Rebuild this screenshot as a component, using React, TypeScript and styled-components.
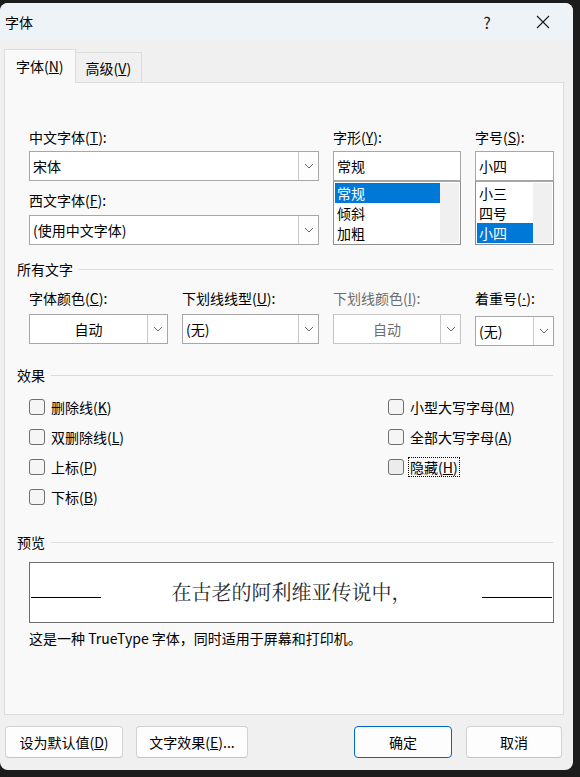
import React from "react";
import styled, { createGlobalStyle } from "styled-components";

const Global = createGlobalStyle`
  html, body { margin: 0; padding: 0; background: #1c1c1c; }
  body { font-family: "Microsoft YaHei UI", "Noto Sans CJK SC", "Noto Sans", sans-serif; font-size: 14px; color: #000; }
  * { box-sizing: border-box; }
`;

const Dialog = styled.div`
  width: 573px;
  height: 767px;
  margin-top: 3px;
  background: #f0f0f0;
  border-radius: 8px;
  overflow: hidden;
  display: flex;
  flex-direction: column;
`;

const TitleBar = styled.div`
  height: 37px;
  background: #eef3f8;
  display: flex;
  align-items: center;
  padding-left: 5px;
  font-size: 14px;
`;

const TitleText = styled.div`
  flex: 1;
  line-height: 20px;
`;

const TitleBtn = styled.div<{ $w: number }>`
  width: ${(p) => p.$w}px;
  height: 37px;
  display: flex;
  align-items: center;
  justify-content: center;
  font-size: 16px;
  color: #1a1a1a;
`;

const TabStrip = styled.div`
  display: flex;
  align-items: flex-end;
  padding-left: 4px;
  margin-top: 9px;
  height: 33px;
`;

const Tab = styled.div<{ $active?: boolean }>`
  height: ${(p) => (p.$active ? 34 : 30)}px;
  padding: 0 ${(p) => (p.$active ? 11 : 10)}px;
  background: ${(p) => (p.$active ? "#f9f9f9" : "#f0f0f0")};
  border: 1px solid #dcdcdc;
  border-bottom: none;
  ${(p) => (p.$active ? "" : "border-left: none;")}
  display: flex;
  align-items: center;
  justify-content: center;
  font-size: 14px;
  margin-bottom: ${(p) => (p.$active ? -1 : 0)}px;
  position: relative;
  z-index: ${(p) => (p.$active ? 1 : 0)};
  padding-bottom: ${(p) => (p.$active ? 1 : 0)}px;
`;

const Panel = styled.div`
  margin-left: 4px;
  width: 560px;
  height: 633px;
  background: #f9f9f9;
  border: 1px solid #dcdcdc;
  padding: 44px 10px 0 12px;
  display: flex;
  flex-direction: column;
`;

const TopGrid = styled.div`
  display: grid;
  grid-template-columns: 290px 128px 79px;
  column-gap: 14px;
  margin-left: 12px;
`;

const Col = styled.div`
  display: flex;
  flex-direction: column;
`;

const Label = styled.div<{ $disabled?: boolean; $mt?: number; $mb?: number }>`
  line-height: 20px;
  height: 20px;
  font-size: 14px;
  white-space: nowrap;
  color: ${(p) => (p.$disabled ? "#6d6d6d" : "#000")};
  margin-top: ${(p) => p.$mt ?? 0}px;
  margin-bottom: ${(p) => p.$mb ?? 4}px;
`;

const Dot = styled.span`
  font-family: "DejaVu Sans", sans-serif;
  text-decoration: underline;
`;

const ComboBox = styled.div<{ $disabled?: boolean; $mt?: number }>`
  height: 30px;
  background: #fff;
  border: 1px solid ${(p) => (p.$disabled ? "#c4c4c4" : "#a7a7a7")};
  display: flex;
  align-items: stretch;
  margin-top: ${(p) => p.$mt ?? 0}px;
  color: ${(p) => (p.$disabled ? "#6d6d6d" : "#000")};
`;

const ComboValue = styled.div<{ $center?: boolean }>`
  flex: 1;
  display: flex;
  align-items: center;
  justify-content: ${(p) => (p.$center ? "center" : "flex-start")};
  padding-left: ${(p) => (p.$center ? 0 : 3)}px;
  font-size: 14px;
  white-space: nowrap;
`;

const ArrowBox = styled.div`
  width: 20px;
  border-left: 1px solid #c9c9c9;
  background: #fdfdfd;
  display: flex;
  align-items: center;
  justify-content: center;
`;

const TextInput = styled.div`
  height: 30px;
  background: #fff;
  border: 1px solid #a7a7a7;
  display: flex;
  align-items: center;
  padding-left: 3px;
  font-size: 14px;
`;

const ListBox = styled.div`
  height: 64px;
  border: 1px solid #8f8f8f;
  border-top-color: #a7a7a7;
  background: #fff;
  display: flex;
  padding: 1px;
`;

const ListItems = styled.div`
  flex: 1;
  display: flex;
  flex-direction: column;
`;

const ListItem = styled.div<{ $sel?: boolean }>`
  height: 20px;
  line-height: 20px;
  padding-left: 2px;
  font-size: 14px;
  background: ${(p) => (p.$sel ? "#0078d7" : "transparent")};
  color: ${(p) => (p.$sel ? "#fff" : "#000")};
`;

const ScrollTrack = styled.div`
  width: 19px;
  background: #f0f0f0;
`;

const SectionHeader = styled.div<{ $mt: number }>`
  display: flex;
  align-items: center;
  gap: 6px;
  margin-top: ${(p) => p.$mt}px;
  height: 20px;
  line-height: 20px;
  font-size: 14px;
  &::after {
    content: "";
    flex: 1;
    height: 1px;
    background: #dcdcdc;
  }
`;

const FourGrid = styled.div`
  display: grid;
  grid-template-columns: 139px 137px 128px 79px;
  column-gap: 14px;
  margin-left: 12px;
  margin-top: 9px;
`;

const EffectsGrid = styled.div`
  display: grid;
  grid-template-columns: 359px auto;
  margin-left: 12px;
  margin-top: 12px;
`;

const CheckCol = styled.div`
  display: flex;
  flex-direction: column;
  gap: 10px;
`;

const CheckRow = styled.div`
  display: flex;
  align-items: center;
  gap: 6px;
  height: 20px;
`;

const Box = styled.span<{ $focus?: boolean }>`
  width: 16px;
  height: 16px;
  border: 1px solid #707070;
  border-radius: 3px;
  background: ${(p) => (p.$focus ? "#ececec" : "#f5f5f5")};
  flex: none;
`;

const CheckLabel = styled.span<{ $focus?: boolean }>`
  font-size: 14px;
  line-height: 18px;
  padding: 0 1px;
  margin-left: -1px;
  outline: ${(p) => (p.$focus ? "1px dotted #000" : "none")};
`;

const PreviewBox = styled.div`
  margin-left: 12px;
  margin-top: 10px;
  width: 525px;
  height: 61px;
  background: #fff;
  border: 1px solid #6d6d6d;
  display: flex;
  align-items: center;
  padding: 0 1px;
`;

const PreviewLine = styled.div`
  width: 70px;
  height: 1px;
  background: #000;
  margin-top: 10px;
`;

const PreviewText = styled.div`
  flex: 1;
  text-align: center;
  font-family: "Noto Serif CJK SC", "Liberation Serif", "Noto Sans CJK SC", serif;
  font-size: 20px;
  color: #2a2a2a;
  margin-top: -2px;
`;

const Caption = styled.div`
  margin-left: 12px;
  margin-top: 5px;
  line-height: 20px;
  font-size: 14px;
`;

const ButtonRow = styled.div`
  display: flex;
  align-items: center;
  margin-top: 11px;
  padding: 0 11px 0 5px;
`;

const Button = styled.div<{ $w: number; $primary?: boolean; $ml?: number }>`
  width: ${(p) => p.$w}px;
  height: 32px;
  margin-left: ${(p) => p.$ml ?? 0}px;
  background: #fdfdfd;
  border: 1px solid ${(p) => (p.$primary ? "#0067c0" : "#d2d2d2")};
  border-bottom-color: ${(p) => (p.$primary ? "#0067c0" : "#c2c2c2")};
  border-radius: 4px;
  display: flex;
  align-items: center;
  justify-content: center;
  font-size: 14px;
`;

const Spacer = styled.div`
  flex: 1;
`;

const Chevron = () => (
  <svg width="10" height="6" viewBox="0 0 10 6">
    <path d="M1 1 L5 5 L9 1" fill="none" stroke="#6a6a6a" strokeWidth="1" />
  </svg>
);

const Combo = ({ value, center, disabled, mt }: { value: string; center?: boolean; disabled?: boolean; mt?: number }) => (
  <ComboBox $disabled={disabled} $mt={mt}>
    <ComboValue $center={center}>{value}</ComboValue>
    <ArrowBox>
      <Chevron />
    </ArrowBox>
  </ComboBox>
);

const Check = ({ children, focus }: { children: React.ReactNode; focus?: boolean }) => (
  <CheckRow>
    <Box $focus={focus} />
    <CheckLabel $focus={focus}>{children}</CheckLabel>
  </CheckRow>
);

export default function App() {
  return (
    <>
      <Global />
      <Dialog>
        <TitleBar>
          <TitleText>字体</TitleText>
          <TitleBtn $w={56}>?</TitleBtn>
          <TitleBtn $w={56}>
            <svg width="14" height="14" viewBox="0 0 14 14">
              <path d="M1 1 L13 13 M13 1 L1 13" stroke="#1a1a1a" strokeWidth="1.1" />
            </svg>
          </TitleBtn>
          <TitleBtn $w={2} />
        </TitleBar>
        <TabStrip>
          <Tab $active>
            字体(<u>N</u>)
          </Tab>
          <Tab>
            高级(<u>V</u>)
          </Tab>
        </TabStrip>
        <Panel>
          <TopGrid>
            <Col>
              <Label>
                中文字体(<u>T</u>):
              </Label>
              <Combo value="宋体" />
              <Label $mt={9} $mb={5}>
                西文字体(<u>F</u>):
              </Label>
              <Combo value="(使用中文字体)" />
            </Col>
            <Col>
              <Label>
                字形(<u>Y</u>):
              </Label>
              <TextInput>常规</TextInput>
              <ListBox>
                <ListItems>
                  <ListItem $sel>常规</ListItem>
                  <ListItem>倾斜</ListItem>
                  <ListItem>加粗</ListItem>
                </ListItems>
                <ScrollTrack />
              </ListBox>
            </Col>
            <Col>
              <Label>
                字号(<u>S</u>):
              </Label>
              <TextInput>小四</TextInput>
              <ListBox>
                <ListItems>
                  <ListItem>小三</ListItem>
                  <ListItem>四号</ListItem>
                  <ListItem $sel>小四</ListItem>
                </ListItems>
                <ScrollTrack />
              </ListBox>
            </Col>
          </TopGrid>

          <SectionHeader $mt={14}>所有文字</SectionHeader>
          <FourGrid>
            <Col>
              <Label $mb={6}>
                字体颜色(<u>C</u>):
              </Label>
              <Combo value="自动" center />
            </Col>
            <Col>
              <Label $mb={6}>
                下划线线型(<u>U</u>):
              </Label>
              <Combo value="(无)" />
            </Col>
            <Col>
              <Label $disabled $mb={6}>
                下划线颜色(<u>I</u>):
              </Label>
              <Combo value="自动" center disabled />
            </Col>
            <Col>
              <Label $mb={6}>
                着重号(<Dot>·</Dot>):
              </Label>
              <Combo value="(无)" mt={2} />
            </Col>
          </FourGrid>

          <SectionHeader $mt={19}>效果</SectionHeader>
          <EffectsGrid>
            <CheckCol>
              <Check>
                删除线(<u>K</u>)
              </Check>
              <Check>
                双删除线(<u>L</u>)
              </Check>
              <Check>
                上标(<u>P</u>)
              </Check>
              <Check>
                下标(<u>B</u>)
              </Check>
            </CheckCol>
            <CheckCol>
              <Check>
                小型大写字母(<u>M</u>)
              </Check>
              <Check>
                全部大写字母(<u>A</u>)
              </Check>
              <Check focus>
                隐藏(<u>H</u>)
              </Check>
            </CheckCol>
          </EffectsGrid>

          <SectionHeader $mt={25}>预览</SectionHeader>
          <PreviewBox>
            <PreviewLine />
            <PreviewText>在古老的阿利维亚传说中，</PreviewText>
            <PreviewLine />
          </PreviewBox>
          <Caption>这是一种 TrueType 字体，同时适用于屏幕和打印机。</Caption>
        </Panel>
        <ButtonRow>
          <Button $w={118}>
            设为默认值(<u>D</u>)
          </Button>
          <Button $w={112} $ml={13}>
            文字效果(<u>E</u>)...
          </Button>
          <Spacer />
          <Button $w={98} $primary>
            确定
          </Button>
          <Button $w={96} $ml={14}>
            取消
          </Button>
        </ButtonRow>
      </Dialog>
    </>
  );
}
